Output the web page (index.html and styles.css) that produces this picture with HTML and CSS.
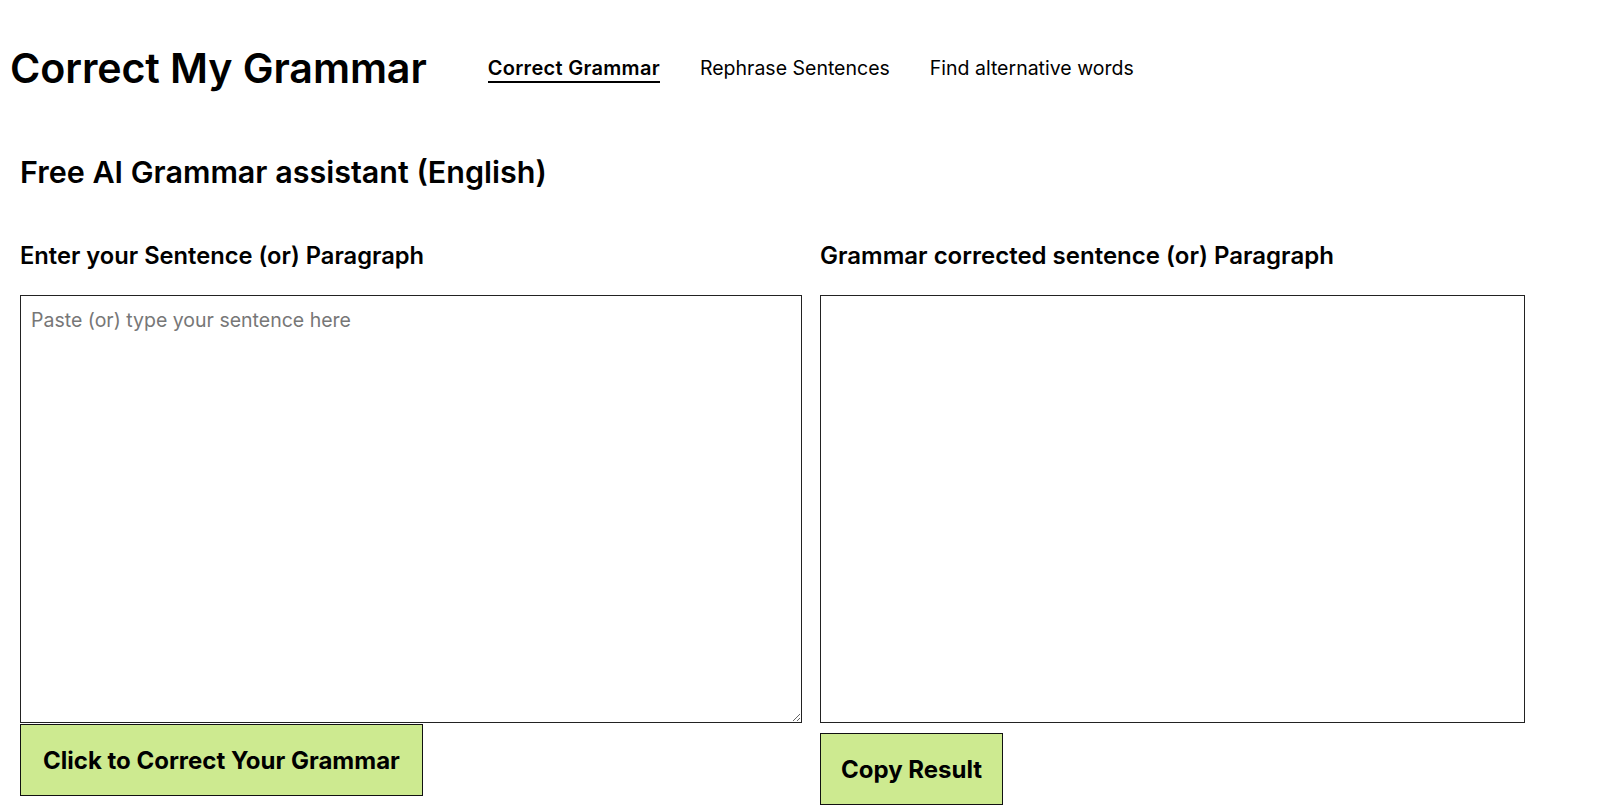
FILE: index.html
```html
<!DOCTYPE html>
<html lang="en">
<head>
  <meta charset="UTF-8">
  <meta name="viewport" content="width=device-width, initial-scale=1.0">
  <title>Correct My Grammar</title>
  <link rel="stylesheet" href="styles.css">
</head>
<body>

  <header>
    <h1>Correct My Grammar</h1>
    <nav>
      <ul>
        <li><a href="#" class="active">Correct Grammar</a></li>
        <li><a href="#">Rephrase Sentences</a></li>
        <li><a href="#">Find alternative words</a></li>
      </ul>
    </nav>
  </header>

  <main>
    <h2>Free AI Grammar assistant (English)</h2>
    <div class="panels">
      <div class="panel panel-input">
        <h3>Enter your Sentence (or) Paragraph</h3>
        <textarea placeholder="Paste (or) type your sentence here"></textarea>
        <button class="action-button">Click to Correct Your Grammar</button>
      </div>
      <div class="panel panel-output">
        <h3>Grammar corrected sentence (or) Paragraph</h3>
        <div class="result"></div>
        <button class="action-button copy-button">Copy Result</button>
      </div>
    </div>
  </main>

</body>
</html>
```

FILE: styles.css
```css
body {
  font-family: 'Inter', 'Noto Sans', sans-serif;
  margin: 0;
  padding: 0;
  background-color: #fff;
  color: #000;
}

header {
  display: flex;
  align-items: center;
  padding: 40px 10px 0 10px;
  height: 56px;
}

header h1 {
  font-size: 41.2px;
  font-weight: 600;
  margin: 0;
  letter-spacing: -0.1px;
}

nav ul {
  list-style-type: none;
  margin: 0 0 0 61px;
  padding: 0;
  display: flex;
  gap: 40px;
}

nav a {
  color: #000;
  text-decoration: none;
  font-size: 19.5px;
}

nav a.active {
  font-size: 20px;
  font-weight: 600;
  letter-spacing: 0.3px;
  border-bottom: 2px solid #000;
  padding-bottom: 1px;
}

main {
  padding: 0 20px;
}

main h2 {
  font-size: 30.5px;
  line-height: 38px;
  font-weight: 600;
  margin: 57px 0 0 0;
}

.panels {
  display: flex;
  gap: 18px;
  margin-top: 50px;
}

.panel h3 {
  font-size: 23.7px;
  line-height: 30px;
  font-weight: 600;
  margin: 0 0 24px 0;
}

.panel-output h3 {
  font-size: 24px;
}

.panel-input {
  width: 782px;
}

.panel-output {
  width: 705px;
}

textarea {
  display: block;
  box-sizing: border-box;
  width: 782px;
  height: 428px;
  margin: 0;
  padding: 12px 10px;
  border: 1px solid #222;
  font-family: 'Inter', 'Noto Sans', sans-serif;
  font-size: 19.5px;
  resize: both;
}

textarea::placeholder {
  color: #777;
}

.result {
  box-sizing: border-box;
  width: 705px;
  height: 428px;
  margin-top: 0;
  border: 1px solid #222;
}

.action-button {
  display: block;
  margin-top: 1px;
  padding: 0 22px;
  height: 72px;
  background-color: #cdea90;
  border: 1px solid #111;
  font-family: 'Inter', 'Noto Sans', sans-serif;
  font-size: 24px;
  font-weight: 700;
  color: #000;
  cursor: pointer;
}

.copy-button {
  margin-top: 10px;
  padding: 0 20px;
}
```
